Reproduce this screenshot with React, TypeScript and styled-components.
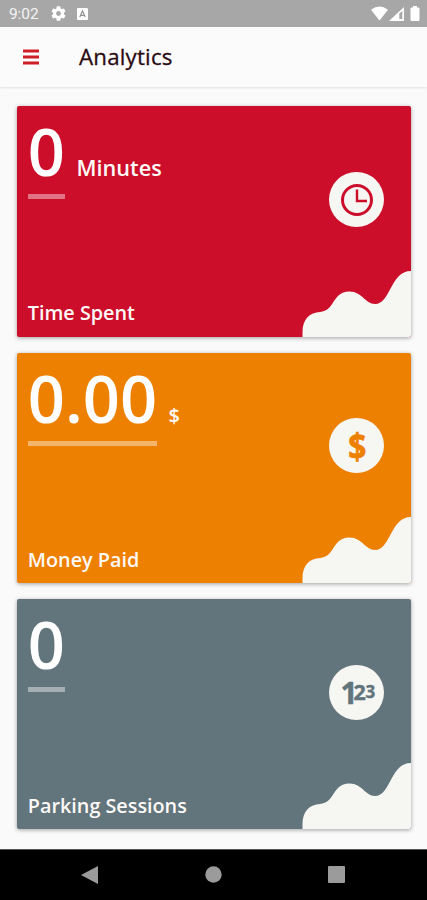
import React from "react";
import styled, { createGlobalStyle } from "styled-components";

const GlobalStyle = createGlobalStyle`
  * { box-sizing: border-box; }
  body { margin: 0; background: #fafafa; font-family: "Open Sans", "Noto Sans", sans-serif; }
  svg { display: block; }
`;

const Screen = styled.div`
  width: 427px;
  height: 900px;
  display: flex;
  flex-direction: column;
  overflow: hidden;
  background: #fafafa;
`;

const StatusBar = styled.div`
  height: 26.5px;
  flex: none;
  display: flex;
  align-items: center;
  padding: 1px 7px 0 9px;
  background: #a7a7a8;
  color: #f4f4f4;
`;

const Clock = styled.span`
  width: 42px;
  font: 400 15.5px/20px Roboto, sans-serif;
  letter-spacing: -0.1px;
`;

const StatusIcon = styled.svg<{ $gap?: number }>`
  margin-right: ${(p) => p.$gap ?? 0}px;
  flex: none;
`;

const Spacer = styled.div`
  flex: 1;
`;

const AppBar = styled.header`
  height: 60.5px;
  flex: none;
  display: flex;
  align-items: center;
  padding-left: 23px;
  gap: 40px;
  background: #fbfbfb;
  box-shadow: 0 1px 2px rgba(0, 0, 0, 0.1);
`;

const Title = styled.h1`
  margin: 0;
  font-size: 22.3px;
  font-weight: 400;
  line-height: 30px;
  letter-spacing: 0.2px;
  color: #2b0a12;
  -webkit-text-stroke: 0.3px #2b0a12;
`;

const CardList = styled.main`
  flex: 1;
  display: flex;
  flex-direction: column;
  gap: 16px;
  padding: 19.3px 15.7px 0 16.8px;
`;

const Card = styled.section<{ $color: string }>`
  position: relative;
  height: 230.4px;
  display: flex;
  flex-direction: column;
  justify-content: space-between;
  padding: 6px 11px 9.5px;
  overflow: hidden;
  border-radius: 2px;
  background: ${(p) => p.$color};
  color: #fdf9f7;
  box-shadow: 0 1px 4px rgba(0, 0, 0, 0.36);
`;

const Figure = styled.div`
  display: flex;
  align-items: baseline;
  gap: 11.5px;
`;

const Value = styled.div`
  font-size: 65px;
  font-weight: 600;
  line-height: 78px;
  color: #fff;
  &::after {
    content: "";
    display: block;
    height: 5px;
    margin-top: 4px;
    background: rgba(255, 255, 255, 0.42);
  }
`;

const Unit = styled.span<{ $size: number }>`
  font-size: ${(p) => p.$size}px;
  font-weight: 600;
`;

const Caption = styled.div`
  font-size: 19.8px;
  font-weight: 600;
  line-height: 28px;
`;

const Badge = styled.div<{ $color: string }>`
  position: absolute;
  right: 27px;
  top: 65.8px;
  width: 55px;
  height: 55px;
  display: flex;
  align-items: center;
  justify-content: center;
  border-radius: 50%;
  background: #f6f6f2;
  color: ${(p) => p.$color};
`;

const Hill = styled.svg`
  position: absolute;
  right: 0;
  bottom: 0;
`;

const DollarMark = styled.span`
  font-size: 36px;
  line-height: 55px;
  font-weight: 700;
  transform: scaleX(0.88);
  -webkit-text-stroke: 0.7px currentColor;
`;

const Digits = styled.div`
  display: flex;
  align-items: center;
  margin-left: 2px;
  font-weight: 700;
`;

const Digit = styled.span<{ $size: number; $width: number; $shift: number }>`
  width: ${(p) => p.$width}px;
  font-size: ${(p) => p.$size}px;
  line-height: 55px;
  margin-top: ${(p) => p.$shift}px;
  -webkit-text-stroke: 0.4px currentColor;
`;

const NavBar = styled.nav`
  height: 51.5px;
  flex: none;
  display: flex;
  align-items: center;
  justify-content: space-between;
  padding: 0 82px 0 81px;
  border-top: 1px solid #555;
  background: #000;
`;

const ClockIcon = () => (
  <svg width="34" height="34" viewBox="0 0 34 34" fill="none" stroke="currentColor" strokeWidth="3">
    <circle cx="17" cy="17" r="14.5" />
    <path d="M17 6.5V18H27" strokeWidth="2.4" />
  </svg>
);

const CountIcon = () => (
  <Digits>
    <Digit $size={30} $width={13} $shift={0}>1</Digit>
    <Digit $size={21.5} $width={12} $shift={-1}>2</Digit>
    <Digit $size={17} $width={9.5} $shift={-1}>3</Digit>
  </Digits>
);

const metrics = [
  { color: "#cc0e2b", value: "0", unit: "Minutes", size: 21.7, caption: "Time Spent", icon: <ClockIcon /> },
  { color: "#ee8000", value: "0.00", unit: "$", size: 20, caption: "Money Paid", icon: <DollarMark>$</DollarMark> },
  { color: "#62747c", value: "0", unit: "", size: 20, caption: "Parking Sessions", icon: <CountIcon /> },
];

export default function App() {
  return (
    <Screen>
      <GlobalStyle />
      <StatusBar>
        <Clock>9:02</Clock>
        <StatusIcon $gap={11} width="15" height="15" viewBox="2 2 20 20" fill="#fff">
          <path d="M19.14 12.94c.04-.3.06-.61.06-.94s-.02-.64-.07-.94l2.03-1.58a.5.5 0 0 0 .12-.61l-1.92-3.32a.5.5 0 0 0-.59-.22l-2.39.96a7 7 0 0 0-1.62-.94l-.36-2.54a.5.5 0 0 0-.48-.41h-3.84a.5.5 0 0 0-.47.41l-.36 2.54c-.59.24-1.13.57-1.62.94l-2.39-.96a.5.5 0 0 0-.59.22L2.74 8.87a.5.5 0 0 0 .12.61l2.03 1.58a7 7 0 0 0 0 1.88l-2.03 1.58a.5.5 0 0 0-.12.61l1.92 3.32c.12.22.37.29.59.22l2.39-.96c.5.38 1.03.7 1.62.94l.36 2.54c.05.24.24.41.48.41h3.84c.24 0 .44-.17.47-.41l.36-2.54c.59-.24 1.13-.56 1.62-.94l2.39.96c.22.08.47 0 .59-.22l1.92-3.32a.5.5 0 0 0-.12-.61zM12 15.2a3.2 3.2 0 1 1 0-6.4 3.2 3.2 0 0 1 0 6.4z" />
        </StatusIcon>
        <StatusIcon width="11" height="12" viewBox="0 0 11 12">
          <rect width="11" height="12" rx="1" fill="#fff" />
          <path d="M2.8 9 5.5 3 8.2 9M4 7.3h3" fill="none" stroke="#929293" strokeWidth="1.2" />
        </StatusIcon>
        <Spacer />
        <StatusIcon $gap={1} width="17" height="15" viewBox="0 0 17 15" fill="#fff">
          <path d="M0 3.8Q8.5-3 17 3.8L8.5 14.5Z" />
        </StatusIcon>
        <StatusIcon $gap={6} width="15" height="14" viewBox="0 0 15 14">
          <path d="M0 14 15 0V14Z" fill="#fff" />
          <path d="M10.3 6.5 13.3 4V12H10.3Z" fill="#a7a7a8" />
        </StatusIcon>
        <StatusIcon width="10" height="15" viewBox="0 0 10 15" fill="#fff">
          <path d="M3 0H7V1.5H8.5Q9.5 1.5 9.5 2.5V14Q9.5 15 8.5 15H1.5Q.5 15 .5 14V2.5Q.5 1.5 1.5 1.5H3Z" />
        </StatusIcon>
      </StatusBar>
      <AppBar>
        <svg width="16" height="16" viewBox="0 0 16 16" fill="#ce1e27">
          <path d="M0 .5H16V3.5H0ZM0 6.5H16V9.5H0ZM0 12.5H16V15.5H0Z" />
        </svg>
        <Title>Analytics</Title>
      </AppBar>
      <CardList>
        {metrics.map((m) => (
          <Card key={m.caption} $color={m.color}>
            <Figure>
              <Value>{m.value}</Value>
              {m.unit && <Unit $size={m.size}>{m.unit}</Unit>}
            </Figure>
            <Caption>{m.caption}</Caption>
            <Badge $color={m.color}>{m.icon}</Badge>
            <Hill width="109" height="66" viewBox="0 0 109 66" fill="#f6f6f2">
              <path d="M.5 66V61C.5 48 8 41.5 18 41C33 40 30 21 47 20.5C60 20 63 33 73 33C89 33 88 0 109 0V66Z" />
            </Hill>
          </Card>
        ))}
      </CardList>
      <NavBar>
        <svg width="17" height="18" viewBox="0 0 17 18" fill="#9b9b9b">
          <path d="M17 0V18L0 9Z" />
        </svg>
        <svg width="17" height="17" viewBox="0 0 17 17" fill="#9b9b9b">
          <circle cx="8.5" cy="8.5" r="8.2" />
        </svg>
        <svg width="17" height="17" viewBox="0 0 17 17" fill="#9b9b9b">
          <rect width="17" height="17" rx="1" />
        </svg>
      </NavBar>
    </Screen>
  );
}
